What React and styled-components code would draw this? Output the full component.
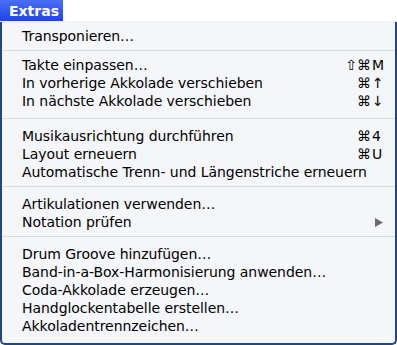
import React from "react";
import styled, { createGlobalStyle } from "styled-components";

const GlobalStyle = createGlobalStyle`
  html, body {
    margin: 0;
    padding: 0;
    background: #ffffff;
  }
  body {
    font-family: "DejaVu Sans", "Noto Sans", sans-serif;
  }
`;

const Screen = styled.div`
  width: 397px;
  height: 345px;
  display: flex;
  flex-direction: column;
  overflow: hidden;
`;

const MenuBar = styled.div`
  height: 21px;
  display: flex;
  align-items: stretch;
  background: #ffffff;
  border-bottom: 1px solid #f0f1f4;
`;

const MenuTitle = styled.div`
  display: flex;
  align-items: center;
  padding: 0 4px 0 9px;
  background: linear-gradient(#4a6ef5, #1f44e8);
  color: #ffffff;
  font-family: "DejaVu Sans", sans-serif;
  font-weight: bold;
  font-size: 14px;
`;

const Menu = styled.div`
  flex: 1;
  box-sizing: border-box;
  display: flex;
  flex-direction: column;
  padding: 5px 0 7px;
  background: #f4f6fa;
  border: 2px solid #24457e;
  border-top: none;
  border-radius: 0 0 5px 5px;
`;

const Item = styled.div`
  height: 18px;
  display: flex;
  align-items: center;
  padding: 0 11px 0 20px;
  font-size: 14px;
  letter-spacing: -0.05px;
  color: #000000;
  white-space: nowrap;
`;

const Label = styled.span`
  flex: 1;
`;

const Shortcut = styled.span`
  display: flex;
  align-items: center;
`;

const Mods = styled.span`
  text-align: right;
  padding-right: 1px;
`;

const Key = styled.span`
  width: 12px;
  text-align: left;
`;

const Separator = styled.div`
  height: ${(p) => p.$height}px;
  display: flex;
  flex-direction: column;
  &::before {
    content: "";
    margin-top: ${(p) => p.$line}px;
    height: 1px;
    background: #d8dbe1;
  }
`;

const SubArrow = styled.svg`
  width: 8px;
  height: 9px;
  margin-right: 1px;
`;

const groups = [
  [{ label: "Transponieren…" }],
  [
    { label: "Takte einpassen…", mods: "⇧⌘", key: "M" },
    { label: "In vorherige Akkolade verschieben", mods: "⌘", key: "↑" },
    { label: "In nächste Akkolade verschieben", mods: "⌘", key: "↓" },
  ],
  [
    { label: "Musikausrichtung durchführen", mods: "⌘", key: "4" },
    { label: "Layout erneuern", mods: "⌘", key: "U" },
    { label: "Automatische Trenn- und Längenstriche erneuern" },
  ],
  [
    { label: "Artikulationen verwenden…" },
    { label: "Notation prüfen", submenu: true },
  ],
  [
    { label: "Drum Groove hinzufügen…" },
    { label: "Band-in-a-Box-Harmonisierung anwenden…" },
    { label: "Coda-Akkolade erzeugen…" },
    { label: "Handglockentabelle erstellen…" },
    { label: "Akkoladentrennzeichen…" },
  ],
];

// separator sizes taken from the screenshot (first one is tighter)
const separators = [
  null,
  { height: 11, line: 5 },
  { height: 17, line: 8 },
  { height: 14, line: 5 },
  { height: 14, line: 5 },
];

const MenuItem = ({ label, mods, shortcutKey, submenu }) => (
  <Item>
    <Label>{label}</Label>
    {shortcutKey && (
      <Shortcut>
        <Mods>{mods}</Mods>
        <Key>{shortcutKey}</Key>
      </Shortcut>
    )}
    {submenu && (
      <SubArrow viewBox="0 0 8 9">
        <path d="M0 0 L8 4.5 L0 9 Z" fill="#6b6b6b" />
      </SubArrow>
    )}
  </Item>
);

export default function App() {
  return (
    <>
      <GlobalStyle />
      <Screen>
        <MenuBar>
          <MenuTitle>Extras</MenuTitle>
        </MenuBar>
        <Menu>
          {groups.map((group, gi) => (
            <React.Fragment key={gi}>
              {separators[gi] && (
                <Separator
                  $height={separators[gi].height}
                  $line={separators[gi].line}
                />
              )}
              {group.map((it) => (
                <MenuItem
                  key={it.label}
                  label={it.label}
                  mods={it.mods}
                  shortcutKey={it.key}
                  submenu={it.submenu}
                />
              ))}
            </React.Fragment>
          ))}
        </Menu>
      </Screen>
    </>
  );
}
